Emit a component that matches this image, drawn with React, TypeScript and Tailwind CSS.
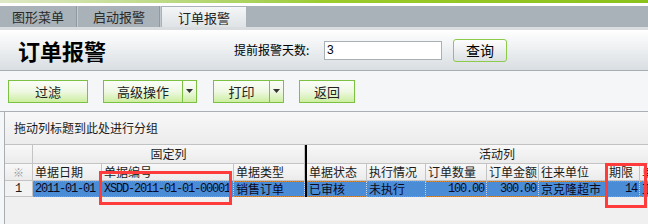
import React from "react";

const cols = [
  { w: "w-[69px]", head: "单据日期", val: "2011-01-01", mono: true, right: false },
  { w: "w-[132px]", head: "单据编号", val: "XSDD-2011-01-01-00001", mono: true, right: false },
  { w: "w-[71px]", head: "单据类型", val: "销售订单", mono: false, right: false },
  { w: "sep", head: "", val: "", mono: false, right: false },
  { w: "w-[60px]", head: "单据状态", val: "已审核", mono: false, right: false },
  { w: "w-[59px]", head: "执行情况", val: "未执行", mono: false, right: false },
  { w: "w-[61px]", head: "订单数量", val: "100.00", mono: true, right: true },
  { w: "w-[52px]", head: "订单金额", val: "300.00", mono: true, right: true },
  { w: "w-[68px]", head: "往来单位", val: "京克隆超市", mono: false, right: false },
  { w: "w-[33px]", head: "期限", val: "14", mono: true, right: true },
  { w: "w-[80px]", head: "单价", val: "正常", mono: false, right: false },
];

export default function App() {
  return (
    <div className="relative w-[648px] h-[224px] overflow-hidden bg-[#f5f6f8] font-['Noto_Sans_CJK_SC',sans-serif] text-[#1a1a1a]">
      {/* top stripe */}
      <div className="h-[3px] bg-gradient-to-r from-[#dfe8c6] via-[#9ccb2a] to-[#8cc21c]" />
      <div className="h-[3px] bg-white" />

      {/* tabs */}
      <div className="flex h-[21px] bg-[#a8b2b8] items-end">
        <Tab label="图形菜单" w="w-[76px]" />
        <TabSep />
        <Tab label="启动报警" w="w-[80px]" />
        <TabSep />
        <div className="w-[84px] h-[20px] flex items-center justify-center text-[13px] leading-none bg-gradient-to-b from-[#f4f6f7] to-[#dfe3e6] text-[#222]">
          订单报警
        </div>
      </div>
      <div className="h-[3px] bg-[#d9dde0]" />

      {/* title */}
      <div className="flex items-center h-[41px] border-b border-[#a8adb1] bg-gradient-to-b from-[#ffffff] to-[#d9dee2]">
        <div className="w-[234px] pl-[18px] text-[22px] font-bold leading-none text-black">
          订单报警
        </div>
        <div className="w-[90px] text-[12px] leading-none text-black">提前报警天数:</div>
        <div className="w-[118px] h-[19px] border border-[#a9b0b4] bg-white flex items-center pl-[2px] text-[12px] font-['Liberation_Sans',sans-serif] text-black">
          3
        </div>
        <button className="ml-[11px] w-[54px] h-[23px] rounded-[3px] border border-[#8ccc4a] bg-gradient-to-b from-[#fdfdfd] to-[#dde1e4] text-[14px] leading-none text-black">
          查询
        </button>
      </div>

      {/* toolbar */}
      <div className="flex items-center h-[41px] border-b border-[#aab0b5] pl-[8px]">
        <GreenButton label="过滤" w="w-[78px]" />
        <div className="ml-[15px]">
          <GreenButton label="高级操作" w="w-[78px]" dropdown />
        </div>
        <div className="ml-[16px]">
          <GreenButton label="打印" w="w-[55px]" dropdown />
        </div>
        <div className="ml-[15px]">
          <GreenButton label="返回" w="w-[54px]" />
        </div>
      </div>

      {/* grid */}
      <div className="ml-[4px] border-l border-[#a9aeb2] h-[112px] flex flex-col bg-[#f0f0f0]">
        <div className="h-[33px] shrink-0 flex items-center pl-[9px] border-b border-[#c2c2c2] bg-gradient-to-b from-[#f8f8f8] to-[#ececec] text-[12px] leading-none">
          拖动列标题到此处进行分组
        </div>

        {/* band row */}
        <div className="flex h-[19px] shrink-0">
          <div className="w-[28px] shrink-0 border-r border-b border-[#c4c4c4] bg-gradient-to-b from-[#f8f8f8] to-[#ebebeb]" />
          <div className="w-[272px] shrink-0 flex items-center justify-center border-r border-b border-[#c4c4c4] bg-gradient-to-b from-[#f8f8f8] to-[#ebebeb] text-[12px] leading-none">
            固定列
          </div>
          <div className="w-[2px] shrink-0 bg-black" />
          <div className="w-[380px] shrink-0 flex items-center justify-center border-b border-[#c4c4c4] bg-gradient-to-b from-[#f8f8f8] to-[#ebebeb] text-[12px] leading-none">
            活动列
          </div>
        </div>

        {/* header row */}
        <div className="flex h-[17px] shrink-0">
          <div className="w-[28px] shrink-0 flex items-center justify-center border-r border-b border-[#c4c4c4] bg-gradient-to-b from-[#f8f8f8] to-[#ebebeb] text-[11px] leading-none text-[#9a9a9a]">
            ※
          </div>
          {cols.map((c, i) =>
            c.w === "sep" ? (
              <div key={i} className="w-[2px] shrink-0 bg-black" />
            ) : (
              <div
                key={i}
                className={`${c.w} shrink-0 flex items-center pl-[2px] overflow-hidden whitespace-nowrap border-r border-b border-[#c4c4c4] bg-gradient-to-b from-[#f8f8f8] to-[#ebebeb] text-[12px] leading-none`}
              >
                {c.head}
              </div>
            )
          )}
        </div>

        {/* data row */}
        <div className="flex h-[16px] shrink-0">
          <div className="w-[28px] shrink-0 flex items-center justify-center border-r border-b border-[#c4c4c4] bg-[#f2f2f2] text-[12px] leading-none font-['Liberation_Mono',monospace]">
            1
          </div>
          {cols.map((c, i) =>
            c.w === "sep" ? (
              <div key={i} className="w-[2px] shrink-0 bg-black" />
            ) : (
              <div
                key={i}
                className={`${c.w} shrink-0 flex items-center overflow-hidden whitespace-nowrap border-r border-[#c9d4e0] border-y border-y-[#d58a3c] border-dotted bg-[#4a8cd6] text-[#0a0a1e] leading-none ${
                  c.right ? "justify-end pr-[2px]" : "pl-[2px]"
                } ${
                  c.mono
                    ? "font-['Liberation_Mono',monospace] text-[12px] tracking-[-1.2px]"
                    : "text-[12px]"
                }`}
              >
                {c.val}
              </div>
            )
          )}
        </div>

        <div className="flex-1 bg-[#f0f0f0]" />
      </div>

      {/* red highlight boxes */}
      <div className="absolute left-[99px] top-[171px] w-[133px] h-[34px] border-[3px] border-[#ff3b3b]" />
      <div className="absolute left-[605px] top-[163px] w-[42px] h-[45px] border-[3px] border-[#ff3b3b]" />
    </div>
  );
}

function Tab({ label, w }: { label: string; w: string }) {
  return (
    <div className={`${w} h-[21px] flex items-center justify-center text-[13px] leading-none text-[#2a2a2a]`}>
      {label}
    </div>
  );
}

function TabSep() {
  return (
    <div className="flex h-[21px] w-[3px]">
      <div className="w-[1px] bg-[#8f999f]" />
      <div className="w-[1px] bg-[#c3cacf]" />
      <div className="w-[1px] bg-[#a8b2b8]" />
    </div>
  );
}

function GreenButton({ label, w, dropdown }: { label: string; w: string; dropdown?: boolean }) {
  return (
    <div className="flex h-[23px] border border-[#7cc142] bg-gradient-to-b from-[#fbfdf8] via-[#eef8e2] to-[#cdee9f]">
      <div className={`${w} flex items-center justify-center text-[13px] leading-none text-[#222]`}>
        {label}
      </div>
      {dropdown && (
        <div className="w-[14px] flex items-center justify-center border-l border-[#7cc142]">
          <svg width="7" height="4" viewBox="0 0 7 4">
            <polygon points="0,0 7,0 3.5,4" fill="#333" />
          </svg>
        </div>
      )}
    </div>
  );
}
